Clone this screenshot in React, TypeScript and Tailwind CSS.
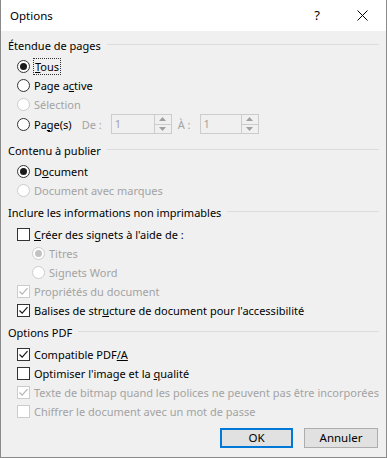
import React from 'react';

const FONT = { fontFamily: '"Noto Sans", "Segoe UI", sans-serif' };

function Radio({ checked = false, disabled = false }: { checked?: boolean; disabled?: boolean }) {
  const ring = disabled ? 'border-[#cccccc]' : 'border-[#333333]';
  const dot = disabled ? 'bg-[#c2c2c2]' : 'bg-[#1a1a1a]';
  return (
    <span className={`w-[13px] h-[13px] rounded-full border bg-white flex items-center justify-center shrink-0 ${ring}`}>
      {checked && <span className={`w-[7px] h-[7px] rounded-full ${dot}`} />}
    </span>
  );
}

function Check({ checked = false, disabled = false }: { checked?: boolean; disabled?: boolean }) {
  const box = disabled ? 'border-[#cccccc]' : 'border-[#333333]';
  return (
    <span className={`w-[13px] h-[13px] border bg-white flex items-center justify-center shrink-0 ${box}`}>
      {checked && (
        <svg width="11" height="11" viewBox="0 0 11 11">
          <path d="M1.5 5.5 L4.2 8.2 L9.5 2.2" fill="none" stroke={disabled ? '#b5b5b5' : '#1a1a1a'} strokeWidth="1.2" />
        </svg>
      )}
    </span>
  );
}

function Header({ label, className = '' }: { label: string; className?: string }) {
  return (
    <div className={`h-[18px] flex items-center ${className}`}>
      <span className="text-black whitespace-nowrap">{label}</span>
      <span className="flex-1 h-px bg-[#dcdcdc] ml-[6px] mb-[1px]" />
    </div>
  );
}

function Row({
  children, label, disabled = false, indent = 'pl-[9px]', className = '',
}: { children: React.ReactNode; label: React.ReactNode; disabled?: boolean; indent?: string; className?: string }) {
  return (
    <div className={`h-[19px] flex items-center gap-[4px] ${indent} ${className}`}>
      {children}
      <span className={`whitespace-nowrap ${disabled ? 'text-[#a3a3a3]' : 'text-black'}`}>{label}</span>
    </div>
  );
}

function Spin({ className = '' }: { className?: string }) {
  return (
    <div className={`h-[20px] border border-[#cccccc] bg-[#f0f0f0] flex ${className}`}>
      <span className="flex-1 pl-[3px] text-[#a3a3a3] leading-[18px]">1</span>
      <div className="w-[17px] flex flex-col">
        <span className="flex-1 border-l border-b border-[#cccccc] flex items-center justify-center">
          <svg width="7" height="4" viewBox="0 0 7 4"><path d="M0 4 L3.5 0 L7 4 Z" fill="#a0a0a0" /></svg>
        </span>
        <span className="flex-1 border-l border-[#cccccc] flex items-center justify-center">
          <svg width="7" height="4" viewBox="0 0 7 4"><path d="M0 0 L3.5 4 L7 0 Z" fill="#a0a0a0" /></svg>
        </span>
      </div>
    </div>
  );
}

export default function App() {
  return (
    <div style={FONT} className="w-[387px] h-[458px] text-[11px] leading-none border-x border-b border-[#8a8a8a] bg-[#f0f0f0] flex flex-col overflow-hidden">
      {/* title bar */}
      <div className="h-[31px] bg-white flex items-center shrink-0">
        <span className="pl-[9px] text-[11.5px] text-black">Options</span>
        <span className="ml-auto mr-[37px] text-[13px] text-black">?</span>
        <svg width="11" height="11" viewBox="0 0 11 11" className="mr-[18px]">
          <path d="M0.5 0.5 L10.5 10.5 M10.5 0.5 L0.5 10.5" stroke="#000" strokeWidth="1" />
        </svg>
      </div>

      <div className="px-[7px] pt-[5px] flex flex-col">
        <Header label="Étendue de pages" />
        <Row className="mt-[3px]" label={<span className="outline outline-1 outline-dotted outline-[#333] outline-offset-0 px-px"><u>T</u>ous</span>}>
          <Radio checked />
        </Row>
        <Row label={<>Page a<u>c</u>tive</>}><Radio /></Row>
        <Row disabled label="Sélection"><Radio disabled /></Row>
        <div className="h-[20px] flex items-center pl-[9px]">
          <Radio />
          <span className="ml-[4px] text-black">Pa<u>g</u>e(s)</span>
          <span className="ml-[10px] text-[#a3a3a3]">De :</span>
          <Spin className="ml-[9px] w-[61px]" />
          <span className="ml-[6px] text-[#a3a3a3]">À :</span>
          <Spin className="ml-[9px] w-[59px]" />
        </div>

        <Header label="Contenu à publier" className="mt-[7px]" />
        <Row className="mt-[3px]" label={<>D<u>o</u>cument</>}><Radio checked /></Row>
        <Row disabled label="Document avec marques"><Radio disabled /></Row>

        <Header label="Inclure les informations non imprimables" className="mt-[3px]" />
        <Row className="mt-[4px]" label={<><u>C</u>réer des signets à l'aide de :</>}><Check /></Row>
        <Row disabled indent="pl-[24px]" label="Titres"><Radio checked disabled /></Row>
        <Row disabled indent="pl-[24px]" label="Signets Word"><Radio disabled /></Row>
        <Row disabled label="Propriétés du document"><Check checked disabled /></Row>
        <Row label={<>Balises de str<u>u</u>cture de document pour l'accessibilité</>}><Check checked /></Row>

        <Header label="Options PDF" className="mt-[3px]" />
        <Row className="mt-[4px]" label={<>Compatible PDF<u>/A</u></>}><Check checked /></Row>
        <Row label={<>Optimiser l'image et la <u>q</u>ualité</>}><Check /></Row>
        <Row disabled label="Texte de bitmap quand les polices ne peuvent pas être incorporées"><Check checked disabled /></Row>
        <Row disabled label="Chiffrer le document avec un mot de passe"><Check disabled /></Row>

        <div className="flex justify-end gap-[11px] mt-[7px] pr-[1px]">
          <button className="w-[73px] h-[20px] border-2 border-[#0078d7] bg-[#e1e1e1] text-black text-[11.5px] leading-none">OK</button>
          <button className="w-[74px] h-[20px] border border-[#adadad] bg-[#e1e1e1] text-black text-[11.5px] leading-none">Annuler</button>
        </div>
      </div>
    </div>
  );
}
